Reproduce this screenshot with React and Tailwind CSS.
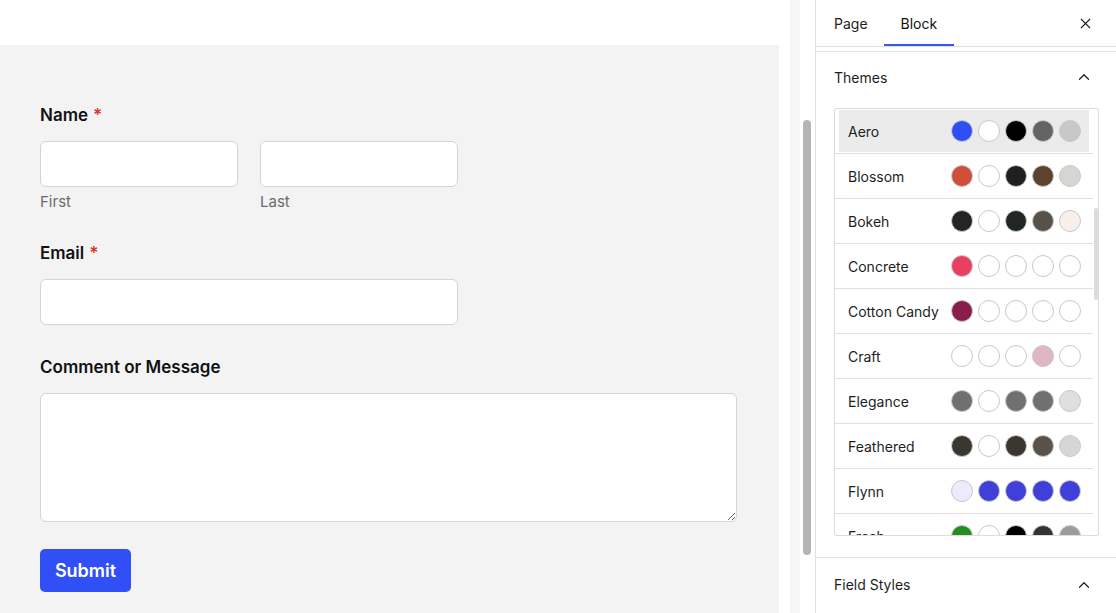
import React from 'react';
import { X, ChevronUp } from 'lucide-react';

const W = '#ffffff';

const themes = [
  { name: 'Aero', colors: ['#2f4ff6', W, '#000000', '#646464', '#c8c8c6'], active: true },
  { name: 'Blossom', colors: ['#cf4f38', W, '#1f1f1d', '#5a4330', '#d7d5d2'] },
  { name: 'Bokeh', colors: ['#222524', W, '#212523', '#57514a', '#f8efeb'] },
  { name: 'Concrete', colors: ['#e93f63', W, W, W, W] },
  { name: 'Cotton Candy', colors: ['#891e4c', W, W, W, W] },
  { name: 'Craft', colors: [W, W, W, '#deb7c2', W] },
  { name: 'Elegance', colors: ['#707070', W, '#707070', '#707070', '#dfdfdf'] },
  { name: 'Feathered', colors: ['#3a3630', W, '#3a3630', '#59514a', '#d5d7d6'] },
  { name: 'Flynn', colors: ['#ebebfb', '#3f3fd9', '#3f3fd9', '#3f3fd9', '#3f3fd9'] },
  { name: 'Fresh', colors: ['#248f1e', W, '#000000', '#323534', '#9c9c9c'] },
];

const font = { fontFamily: 'Inter, "Liberation Sans", sans-serif' };

const Label = ({ children, required }) => (
  <p className="text-[17px] leading-6 font-semibold text-[#111]">
    {children}
    {required && <span className="text-[#d63638] ml-[5px]">*</span>}
  </p>
);

const inputCls = 'block bg-white border border-[#d4d4d4] rounded-[6px] outline-none';

// Theme row
const ThemeRow = ({ theme }) => (
  <div className="h-[45px] shrink-0 border-b border-[#e0e0e0] flex">
    <div className={`flex-1 mx-[4px] my-[1px] pl-[9px] pr-[8px] flex items-center justify-between ${theme.active ? 'bg-[#ebebeb]' : ''}`}>
      <span className="text-[14px] text-[#1e1e1e]">{theme.name}</span>
      <div className="flex gap-[5px]">
        {theme.colors.map((c, i) => (
          <span
            key={i}
            className="w-[22px] h-[22px] rounded-full border border-[#c9c9c9]"
            style={{ backgroundColor: c }}
          />
        ))}
      </div>
    </div>
  </div>
);

export default function App() {
  return (
    <div className="flex h-[613px] w-[1116px] overflow-hidden bg-white" style={font}>
      {/* Editor canvas */}
      <div className="w-[779px] flex flex-col shrink-0">
        <div className="h-[45px] bg-white" />
        <div className="flex-1 bg-[#f3f3f3] pl-10 pt-[58px]">
          <Label required>Name</Label>
          <div className="flex gap-[22px] mt-[14px]">
            <div>
              <input className={`${inputCls} w-[198px] h-[46px]`} />
              <p className="mt-[5px] text-[15px] leading-5 text-[#6b6b6b]">First</p>
            </div>
            <div>
              <input className={`${inputCls} w-[198px] h-[46px]`} />
              <p className="mt-[5px] text-[15px] leading-5 text-[#6b6b6b]">Last</p>
            </div>
          </div>

          <div className="mt-[29px]">
            <Label required>Email</Label>
            <input className={`${inputCls} w-[418px] h-[46px] mt-[14px]`} />
          </div>

          <div className="mt-[30px]">
            <Label>Comment or Message</Label>
            <textarea className={`${inputCls} w-[697px] h-[129px] mt-[14px]`} />
          </div>

          <button className="mt-[27px] w-[91px] h-[43px] rounded-[5px] bg-[#3050f6] text-white text-[18px] font-semibold">
            Submit
          </button>
        </div>
      </div>

      {/* Scroll gutter */}
      <div className="w-[11px] bg-white shrink-0" />
      <div className="w-[10px] bg-[#f7f7f7] shrink-0" />
      <div className="w-[15px] shrink-0 pt-[120px] pl-[3px]">
        <div className="w-[8px] h-[435px] rounded-full bg-[#b5b5b5]" />
      </div>

      {/* Sidebar */}
      <aside className="w-[301px] shrink-0 border-l border-[#e0e0e0] bg-white flex flex-col">
        <div className="h-[47px] border-b border-[#e0e0e0] flex items-stretch pl-[2px] pr-[22px]">
          <button className="px-4 text-[14px] text-[#1e1e1e]">Page</button>
          <button className="px-[17px] text-[14px] text-[#111] border-b-2 border-[#3858e9] pt-[2px]">Block</button>
          <div className="flex-1" />
          <button className="text-[#1e1e1e]">
            <X size={17} strokeWidth={1.6} />
          </button>
        </div>

        <div className="mt-[4px] border-t border-[#e0e0e0]">
          <div className="h-[50px] flex items-center justify-between pl-[18px] pr-[23px]">
            <span className="text-[14px] text-[#1e1e1e]">Themes</span>
            <ChevronUp size={18} strokeWidth={1.6} className="text-[#1e1e1e]" />
          </div>
          <div className="ml-[18px] mt-[6px] w-[265px] h-[428px] border border-[#dcdcdc] rounded-[2px] overflow-hidden flex">
            <div className="w-[258px] flex flex-col">
              {themes.map((t) => (
                <ThemeRow key={t.name} theme={t} />
              ))}
            </div>
            <div className="pt-[99px] pl-[1px]">
              <div className="w-[4px] h-[92px] rounded-full bg-[#dcdcdc]" />
            </div>
          </div>
        </div>

        <div className="mt-[21px] border-t border-[#e0e0e0] h-[54px] flex items-center justify-between pl-[18px] pr-[23px]">
          <span className="text-[14px] text-[#1e1e1e]">Field Styles</span>
          <ChevronUp size={18} strokeWidth={1.6} className="text-[#1e1e1e]" />
        </div>
      </aside>
    </div>
  );
}
